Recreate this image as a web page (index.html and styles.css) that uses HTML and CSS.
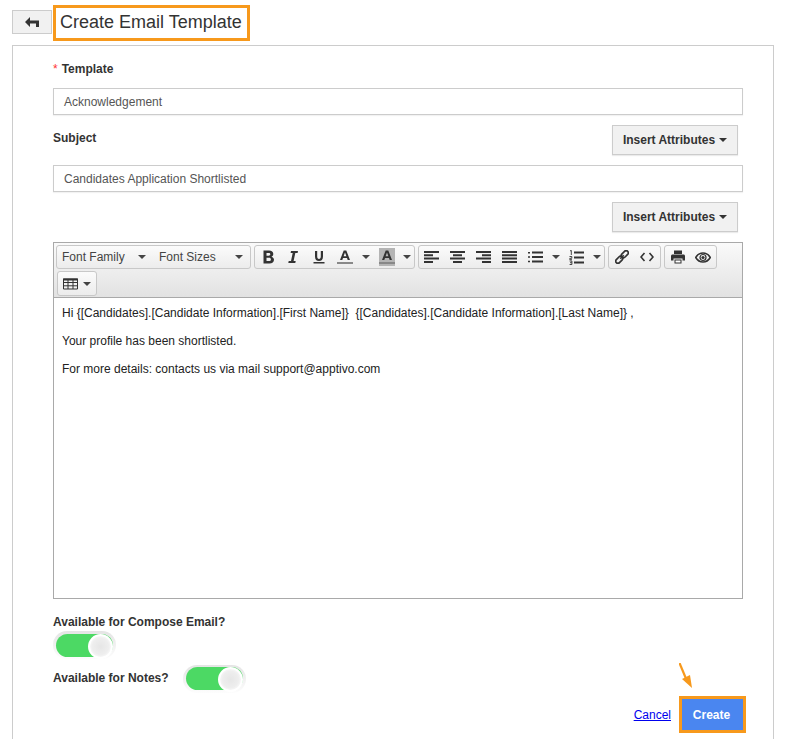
FILE: index.html
```html
<!DOCTYPE html>
<html lang="en">
<head>
<meta charset="utf-8">
<title>Create Email Template</title>
<link rel="stylesheet" href="styles.css">
</head>
<body>
<svg class="defs" width="0" height="0" aria-hidden="true">
  <symbol id="i-left" viewBox="0 0 14 10"><path d="M0 5 5 0v3.500h9V10h-3V6.500H5V10z" fill="#333"/></symbol>
  <symbol id="i-bold" viewBox="0 0 14 14"><path fill-rule="evenodd" d="M2.500 .5h5.500c2.700 0 4.300 1.300 4.300 3.400 0 1.300-.7 2.300-1.800 2.800 1.500.4 2.500 1.600 2.500 3.100 0 2.300-1.800 3.700-4.500 3.700H2.500zM5.500 3v2.700h2.200c1 0 1.600-.5 1.600-1.400S8.700 3 7.700 3zM5.500 7.800V11h2.500c1.200 0 1.900-.6 1.900-1.600S9.200 7.800 8 7.800z" fill="#333"/></symbol>
  <symbol id="i-italic" viewBox="0 0 14 14"><path d="M5 1h7l-.4 2H9.300L7.600 11h2.100l-.4 2H2.300l.4-2H5L6.700 3H4.600z" fill="#333"/></symbol>
  <symbol id="i-under" viewBox="0 0 14 14"><path d="M3 1h2.200v5.500c0 1.600.6 2.500 1.800 2.500s1.800-.9 1.800-2.500V1H11v5.500C11 9.600 9.500 11 7 11S3 9.600 3 6.500zM1.500 12h11v1.500h-11z" fill="#333"/></symbol>
  <symbol id="i-a" viewBox="0 0 16 16"><path fill-rule="evenodd" d="M6.700 1.500h2.600l3.700 9.500h-2.300l-.7-2H6l-.7 2H3zM6.600 7.200h2.800L8 3.500z" fill="#333"/><path d="M0 13h16v2H0z" fill="#888"/></symbol>
  <symbol id="i-al" viewBox="0 0 15 12"><path d="M0 0h15v2H0zM0 3.300h9v2H0zM0 6.600h15v2H0zM0 10h9v2H0z" fill="#333"/></symbol>
  <symbol id="i-ac" viewBox="0 0 15 12"><path d="M0 0h15v2H0zM3 3.300h9v2H3zM0 6.600h15v2H0zM3 10h9v2H3z" fill="#333"/></symbol>
  <symbol id="i-ar" viewBox="0 0 15 12"><path d="M0 0h15v2H0zM6 3.300h9v2H6zM0 6.600h15v2H0zM6 10h9v2H6z" fill="#333"/></symbol>
  <symbol id="i-aj" viewBox="0 0 15 12"><path d="M0 0h15v2H0zM0 3.300h15v2H0zM0 6.600h15v2H0zM0 10h15v2H0z" fill="#333"/></symbol>
  <symbol id="i-ul" viewBox="0 0 15 12"><path d="M4 .5h11v2H4zM4 5h11v2H4zM4 9.500h11v2H4zM0 1h2v1.500H0zM0 5.300h2v1.500H0zM0 9.800h2v1.500H0z" fill="#333"/></symbol>
  <symbol id="i-ol" viewBox="0 0 15 15"><path d="M5 1.500h10v2H5zM5 6.500h10v2H5zM5 11.500h10v2H5z" fill="#333"/><path d="M1 1l1.300-.7V5M.5 6.500h2.300v1.800H.8v1.400h2.200M.6 11h2.300v3.500H.6M1 12.700h1.800" fill="none" stroke="#333" stroke-width=".9"/></symbol>
  <symbol id="i-link" viewBox="0 0 14 14"><g fill="none" stroke="#333" stroke-width="1.700" transform="rotate(-45 7 7)"><rect x="-1" y="4.800" width="8" height="4.400" rx="2.200"/><rect x="7" y="4.800" width="8" height="4.400" rx="2.200"/><path d="M4.500 7h5"/></g></symbol>
  <symbol id="i-code" viewBox="0 0 14 10"><path d="M4.500 1 1 5l3.500 4M9.500 1 13 5 9.500 9" fill="none" stroke="#333" stroke-width="1.600"/></symbol>
  <symbol id="i-print" viewBox="0 0 14 13"><path fill-rule="evenodd" d="M3 0h8v3.500H3zM1.500 4h11c.8 0 1.500.7 1.500 1.500V10h-2.500V8h-9v2H0V5.500C0 4.700.7 4 1.500 4zM3.500 9h7v4h-7z" fill="#333"/><path d="M4.500 10h5v2h-5z" fill="#fff"/></symbol>
  <symbol id="i-eye" viewBox="0 0 16 11"><path d="M.7 5.500C2.500 2.500 5 1 8 1s5.500 1.500 7.300 4.500C13.500 8.500 11 10 8 10S2.500 8.500.7 5.500z" fill="none" stroke="#333" stroke-width="1.500"/><circle cx="8" cy="5.500" r="3" fill="none" stroke="#333" stroke-width="1.200"/><circle cx="8" cy="5.500" r="1.600" fill="#333"/></symbol>
  <symbol id="i-table" viewBox="0 0 15 11"><path fill="none" stroke="#333" stroke-width="1" d="M.5.500h14v10H.500zM.5 4h14M.5 7.300h14M5 .5v10M10 .5v10"/><path d="M0 0h15v2H0z" fill="#333"/></symbol>
</svg>

<header class="page-head">
  <button class="back-btn" type="button" aria-label="Back"><svg class="back-icon"><use href="#i-left"/></svg></button>
  <h1 class="title">Create Email Template</h1>
</header>

<main class="panel">
  <div class="field-label label-template"><span class="req">*</span>Template</div>
  <div class="input">Acknowledgement</div>

  <div class="attr-row subject-row">
    <div class="field-label">Subject</div>
    <button class="attr-btn" type="button">Insert Attributes<span class="caret"></span></button>
  </div>
  <div class="input">Candidates Application Shortlisted</div>

  <div class="attr-row attr-only">
    <button class="attr-btn" type="button">Insert Attributes<span class="caret"></span></button>
  </div>

  <section class="editor">
    <div class="toolbar">
      <div class="group">
        <div class="tb tb-select tb-family">Font Family<span class="caret dark"></span></div>
        <div class="tb tb-select tb-sizes">Font Sizes<span class="caret dark"></span></div>
      </div>
      <div class="group">
        <div class="tb tb-n"><svg class="ic"><use href="#i-bold"/></svg></div>
        <div class="tb"><svg class="ic"><use href="#i-italic"/></svg></div>
        <div class="tb"><svg class="ic"><use href="#i-under"/></svg></div>
        <div class="tb"><svg class="ic ic-a"><use href="#i-a"/></svg></div>
        <div class="tb tb-c"><span class="caret dark"></span></div>
        <div class="tb tb-n"><span class="hilite"><svg class="ic ic-a"><use href="#i-a"/></svg></span></div>
        <div class="tb tb-c tb-end"><span class="caret dark"></span></div>
      </div>
      <div class="group">
        <div class="tb tb-n"><svg class="ic ic-w"><use href="#i-al"/></svg></div>
        <div class="tb"><svg class="ic ic-w"><use href="#i-ac"/></svg></div>
        <div class="tb"><svg class="ic ic-w"><use href="#i-ar"/></svg></div>
        <div class="tb"><svg class="ic ic-w"><use href="#i-aj"/></svg></div>
        <div class="tb"><svg class="ic ic-w"><use href="#i-ul"/></svg></div>
        <div class="tb tb-c"><span class="caret dark"></span></div>
        <div class="tb tb-n"><svg class="ic ic-ol"><use href="#i-ol"/></svg></div>
        <div class="tb tb-c tb-end"><span class="caret dark"></span></div>
      </div>
      <div class="group">
        <div class="tb tb-n"><svg class="ic"><use href="#i-link"/></svg></div>
        <div class="tb"><svg class="ic ic-code"><use href="#i-code"/></svg></div>
      </div>
      <div class="group">
        <div class="tb tb-n"><svg class="ic"><use href="#i-print"/></svg></div>
        <div class="tb"><svg class="ic ic-eye"><use href="#i-eye"/></svg></div>
      </div>
      <div class="group group-table">
        <div class="tb tb-table"><svg class="ic ic-w"><use href="#i-table"/></svg><span class="caret dark"></span></div>
      </div>
    </div>
    <div class="editor-body">
      <p>Hi {[Candidates].[Candidate Information].[First Name]}&nbsp; {[Candidates].[Candidate Information].[Last Name]} ,</p>
      <p>Your profile has been shortlisted.</p>
      <p>For more details: contacts us via mail support@apptivo.com</p>
    </div>
  </section>

  <div class="field-label label-compose">Available for Compose Email?</div>
  <div class="toggle"><span class="knob"></span></div>
  <div class="notes-row">
    <div class="field-label">Available for Notes?</div>
    <div class="toggle"><span class="knob"></span></div>
  </div>

  <div class="actions">
    <a class="cancel" href="#">Cancel</a>
    <div class="create-wrap">
      <svg class="arrow" viewBox="0 0 16 26" width="16" height="26"><path d="M.5 0 8 18" stroke="#f7991c" stroke-width="2.200" fill="none"/><path d="M3 16 11 12 13 25z" fill="#f7991c"/></svg>
      <button class="create" type="button">Create</button>
    </div>
  </div>
</main>
</body>
</html>
```

FILE: styles.css
```css
* { box-sizing: border-box; }
html, body { margin: 0; padding: 0; height: 739px; overflow: hidden; background: #fff; }
body { font-family: "Liberation Sans", Arial, sans-serif; font-size: 12px; color: #333; }
.defs { position: absolute; }

.page-head { display: flex; align-items: flex-start; height: 45px; padding: 5px 0 0 12px; }
.back-btn { width: 40px; height: 24px; margin: 5px 1px 0 0; padding: 0; border: 1px solid #ccc; background: #f1f1f1; display: flex; align-items: center; justify-content: center; }
.back-icon { width: 14px; height: 10px; }
.title { margin: 0; width: 197px; height: 36px; border: 3px solid #f7991c; padding: 0 0 0 4px; font-size: 18px; font-weight: 400; line-height: 28px; color: #333; white-space: nowrap; }

.panel { margin: 0 16px 0 12px; border: 1px solid #ccc; border-bottom: 0; padding: 0 30px 0 40px; height: 694px; }

.field-label { font-weight: 700; font-size: 12px; line-height: 14px; color: #333; }
.label-template { padding-top: 16px; height: 42px; }
.req { color: #f33; font-weight: 400; margin-right: 4px; }
.input { height: 27px; border: 1px solid #ccc; box-shadow: 0 1px 1px rgba(0,0,0,.05); padding: 0 10px; line-height: 26px; color: #555; font-size: 12px; }

.attr-row { display: flex; justify-content: space-between; align-items: flex-start; padding-right: 5px; }
.subject-row { margin-top: 10px; height: 40px; }
.subject-row .field-label { margin-top: 6px; }
.attr-only { justify-content: flex-end; margin-top: 10px; height: 40px; }
.attr-btn { width: 126px; height: 30px; padding: 0; border: 1px solid #ccc; background: #f1f1f1; box-shadow: 0 1px 1px rgba(0,0,0,.08); font-family: inherit; font-size: 12px; font-weight: 700; color: #333; display: flex; align-items: center; justify-content: center; }
.caret { display: inline-block; width: 0; height: 0; border-left: 4px solid transparent; border-right: 4px solid transparent; border-top: 4px solid #333; margin-left: 4px; }
.caret.dark { border-left-width: 4.500px; border-right-width: 4.500px; border-top-color: #444; margin-left: 0; }

.editor { height: 357px; border: 1px solid #a9a9a9; }
.toolbar { height: 55px; padding: 2px 2px 0; display: flex; flex-wrap: wrap; align-content: flex-start; gap: 2px 3px; background: linear-gradient(#fafafa, #e2e2e2); border-bottom: 1px solid #a9a9a9; }
.group { display: flex; height: 24px; border: 1px solid #c8c8c8; border-radius: 3px; background: linear-gradient(#fbfbfb, #ececec); }
.group-table { margin-left: 1px; height: 25px; }
.tb { width: 26px; display: flex; align-items: center; justify-content: center; }
.tb-n { width: 25px; }
.tb-c { width: 16px; }
.tb-end { width: 15px; }
.tb-select { justify-content: space-between; padding: 0 7px 0 5px; font-size: 12px; color: #444; }
.tb-family { width: 96px; }
.tb-sizes { width: 97px; padding-left: 6px; }
.tb-table { width: 38px; gap: 5px; }
.ic { width: 14px; height: 14px; display: block; }
.ic-w { width: 15px; height: 12px; }
.ic-ol { width: 15px; height: 15px; }
.ic-a { width: 16px; height: 16px; }
.ic-code { width: 14px; height: 10px; }
.ic-eye { width: 16px; height: 11px; }
.hilite { display: block; width: 16px; height: 18px; background: #b4b4b4; padding-top: 1px; }

.editor-body { padding: 8px 8px 0; font-size: 12px; color: #222; }
.editor-body p { margin: 0 0 14px; line-height: 14px; }

.label-compose { margin-top: 16px; }
.toggle { width: 63px; height: 28px; border-radius: 14px; background: linear-gradient(#e4e4e4, #fdfdfd); padding: 3px; margin-top: 2px; }
.toggle .knob { display: block; position: relative; width: 57px; height: 23px; border-radius: 12px; background: #4cd964; }
.knob::after { content: ""; position: absolute; right: 0; top: 0; width: 21px; height: 21px; border-radius: 50%; border: 2px solid #fff; background: radial-gradient(circle at 50% 50%, #e6e6e6 0, #eeeeee 55%, #ffffff 85%); }
.notes-row { display: flex; align-items: flex-start; gap: 14px; margin-top: 6px; }
.notes-row .field-label { margin-top: 6px; }
.notes-row .toggle { margin-top: 0; padding-top: 2px; }

.actions { display: flex; justify-content: flex-end; align-items: center; gap: 8px; margin: 3px -3px 0 0; }
.cancel { color: #00e; font-size: 12px; }
.create-wrap { position: relative; }
.create { display: block; width: 67px; height: 37px; border: 3px solid #f7991c; padding: 0 2px 0 0; background: #4a86f0; color: #fff; font-family: inherit; font-size: 12px; font-weight: 700; }
.arrow { position: absolute; left: 0; top: -33px; }
```
